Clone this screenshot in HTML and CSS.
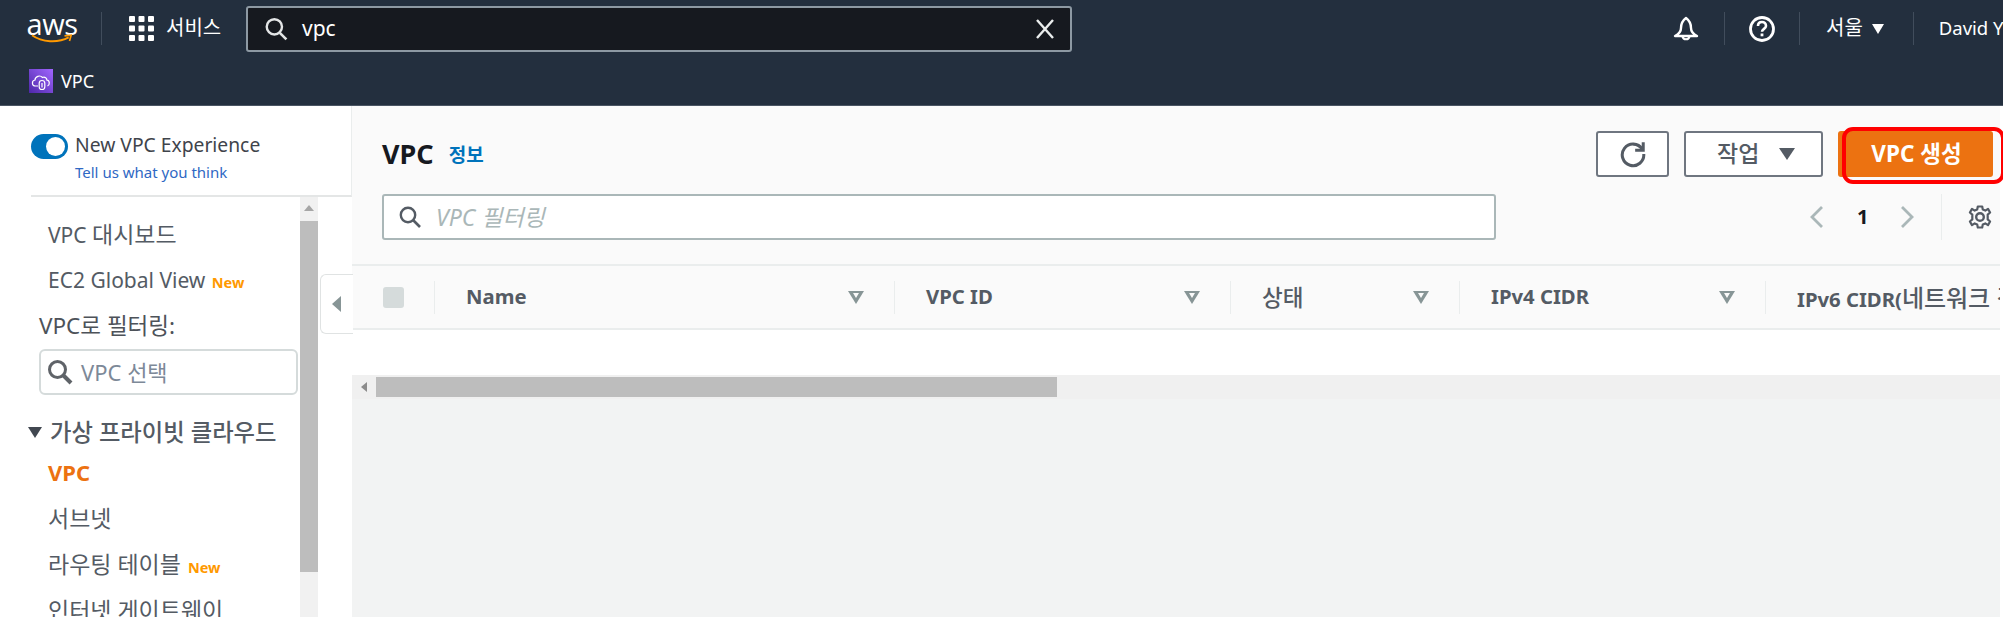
FILE: index.html
```html
<!DOCTYPE html>
<html lang="ko">
<head>
<meta charset="utf-8">
<title>VPC</title>
<link rel="stylesheet" href="styles.css">
</head>
<body>
<div class="app">
  <header class="topbar">
    <div class="toprow">
      <div class="logo">
        <span class="logo-text">aws</span>
        <svg class="logo-smile" viewBox="0 0 50 12" width="50" height="12"><path d="M1 1.5C13 10 32 11 45 4" fill="none" stroke="#f90" stroke-width="2.4"/><path d="M40 2.2L48 1.4L46 8.5" fill="none" stroke="#f90" stroke-width="2"/></svg>
      </div>
      <span class="vsep sep-logo"></span>
      <svg class="grid-icon" viewBox="0 0 25 25" width="25" height="25"><g fill="#fff"><rect width="6" height="6" rx="1"/><rect x="9.500" width="6" height="6" rx="1"/><rect x="19" width="6" height="6" rx="1"/><rect y="9.500" width="6" height="6" rx="1"/><rect x="9.500" y="9.500" width="6" height="6" rx="1"/><rect x="19" y="9.500" width="6" height="6" rx="1"/><rect y="19" width="6" height="6" rx="1"/><rect x="9.500" y="19" width="6" height="6" rx="1"/><rect x="19" y="19" width="6" height="6" rx="1"/></g></svg>
      <span class="services">서비스</span>
      <div class="topsearch">
        <svg viewBox="0 0 22 22" width="24" height="24"><circle cx="9.500" cy="9" r="7" fill="none" stroke="#e3e5e6" stroke-width="2.200"/><path d="M14.500 14.500L20.500 20.500" stroke="#e3e5e6" stroke-width="2.400"/></svg>
        <span class="topsearch-text">vpc</span>
        <svg class="clear" viewBox="0 0 20 20" width="20" height="20"><path d="M2 1L18 19M18 1L2 19" stroke="#eaeded" stroke-width="2.400"/></svg>
      </div>
      <div class="topright">
        <svg class="bell" viewBox="0 0 26 26" width="26" height="26"><path d="M13 2C9 5 8 8 8 12C8 15 6 18 2 20H24C20 18 18 15 18 12C18 8 17 5 13 2Z" fill="none" stroke="#fff" stroke-width="2.400" stroke-linejoin="round"/><path d="M9.500 20.500A3.600 3.600 0 0 0 16.500 20.500" fill="none" stroke="#fff" stroke-width="2.200"/></svg>
        <span class="vsep sep-bell"></span>
        <svg class="help" viewBox="0 0 26 26" width="26" height="26"><circle cx="13" cy="13" r="11.500" fill="none" stroke="#fff" stroke-width="2.800"/><path d="M9 10C9 7.200 10.800 6 13 6S17 7.500 17 10C17 12.800 13 13 13 15.800" fill="none" stroke="#fff" stroke-width="2.600"/><rect x="11.600" y="17.500" width="2.800" height="2.800" fill="#fff"/></svg>
        <span class="vsep sep-help"></span>
        <span class="region">서울</span>
        <span class="caret"></span>
        <span class="vsep sep-region"></span>
        <span class="user">David Y</span>
      </div>
    </div>
    <div class="subrow">
      <span class="svc-icon">
        <svg viewBox="0 0 24 24" width="24" height="24"><path d="M9 17H6.500C2.500 17 2.500 11.500 6 11C6 7.500 11 5.500 13.500 8.500C16 7.500 18 9.500 17.800 11C21 11.500 21 16 18.500 17" fill="none" stroke="#fff" stroke-width="1.200"/><rect x="10.200" y="11.500" width="5.600" height="9" rx="2.800" fill="none" stroke="#fff" stroke-width="1.200"/><rect x="12.400" y="14" width="1.200" height="4.500" fill="#fff"/></svg>
      </span>
      <span class="svc-name">VPC</span>
    </div>
  </header>

  <div class="body">
    <aside class="sidebar">
      <div class="exp">
        <span class="toggle"><span class="knob"></span></span>
        <div class="exp-text">
          <div class="exp-title">New VPC Experience</div>
          <a class="exp-link">Tell us what you think</a>
        </div>
      </div>
      <div class="navwrap">
        <nav class="nav">
          <div class="item">VPC <span class="ko">대시보드</span></div>
          <div class="item">EC2 Global View <span class="new">New</span></div>
          <div class="label">VPC로 필터링:</div>
          <div class="navinput">
            <svg viewBox="0 0 26 26" width="26" height="26"><circle cx="10.500" cy="10.500" r="8" fill="none" stroke="#5f6368" stroke-width="3"/><path d="M16.500 16.500L24 24" stroke="#5f6368" stroke-width="4"/></svg>
            <span>VPC 선택</span>
          </div>
          <div class="head"><span class="head-caret"></span>가상 프라이빗 클라우드</div>
          <div class="item active">VPC</div>
          <div class="item ko">서브넷</div>
          <div class="item ko">라우팅 테이블 <span class="new">New</span></div>
          <div class="item ko">인터넷 게이트웨이</div>
        </nav>
        <div class="vscroll">
          <div class="vscroll-up"><span></span></div>
          <div class="vscroll-thumb"></div>
        </div>
      </div>
      <div class="collapse"><span></span></div>
    </aside>

    <main class="main">
      <div class="titlerow">
        <span class="title">VPC</span>
        <a class="info">정보</a>
        <button class="btn btn-icon">
          <svg viewBox="0 0 26 26" width="28" height="28"><path d="M21.500 8.500A10 10 0 1 0 23 13" fill="none" stroke="#545b64" stroke-width="2.800"/><path d="M22.500 2V9.500H15" fill="none" stroke="#545b64" stroke-width="2.800"/></svg>
        </button>
        <button class="btn btn-action"><span class="btn-text">작업</span><span class="btn-caret"></span></button>
        <div class="primary-wrap">
          <button class="btn-primary"><span class="primary-text">VPC 생성</span></button>
          <span class="redbox"></span>
        </div>
      </div>
      <div class="filterrow">
        <div class="filter">
          <svg viewBox="0 0 22 22" width="22" height="22"><circle cx="9" cy="9" r="7.200" fill="none" stroke="#545b64" stroke-width="2.400"/><path d="M14 14L21 21" stroke="#545b64" stroke-width="2.600"/></svg>
          <span>VPC 필터링</span>
        </div>
        <div class="pager">
          <svg class="chev" viewBox="0 0 14 24" width="14" height="24"><path d="M12 2L2 12L12 22" fill="none" stroke="#aab7b8" stroke-width="2.800"/></svg>
          <span class="page">1</span>
          <svg class="chev" viewBox="0 0 14 24" width="14" height="24"><path d="M2 2L12 12L2 22" fill="none" stroke="#aab7b8" stroke-width="2.800"/></svg>
          <span class="pager-sep"></span>
          <svg class="gear" viewBox="0 0 24 24" width="24" height="24"><circle cx="12" cy="12" r="3.800" fill="none" stroke="#545b64" stroke-width="2.400"/><path d="M9.800 1.500H14.200L14.800 4.600L17.300 5.600L20 3.900L22.100 7.500L19.700 9.600V14.400L22.100 16.500L20 20.100L17.300 18.400L14.800 19.400L14.200 22.500H9.800L9.200 19.400L6.700 18.400L4 20.100L1.900 16.500L4.300 14.400V9.600L1.900 7.500L4 3.900L6.700 5.600L9.200 4.600Z" fill="none" stroke="#545b64" stroke-width="2.200" stroke-linejoin="round"/></svg>
        </div>
      </div>
      <div class="thead">
        <div class="th th-check"><span class="check"></span></div>
        <div class="th th-name"><span>Name</span><i class="sort"></i></div>
        <div class="th th-id"><span>VPC ID</span><i class="sort"></i></div>
        <div class="th th-state"><span class="ko-th">상태</span><i class="sort"></i></div>
        <div class="th th-v4"><span>IPv4 CIDR</span><i class="sort"></i></div>
        <div class="th th-v6"><span>IPv6 CIDR(<span class="ko-wide">네트워크 경계 그룹</span>)</span></div>
      </div>
      <div class="tbody"></div>
      <div class="hscroll">
        <span class="hscroll-left"></span>
        <span class="hscroll-thumb"></span>
      </div>
    </main>
  </div>
</div>
</body>
</html>
```

FILE: styles.css
```css
* { box-sizing: border-box; }
html, body { margin: 0; padding: 0; background: #fff; }
body { font-family: "Noto Sans", "Noto Sans CJK KR", sans-serif; }
.app { width: 2003px; height: 617px; overflow: hidden; display: flex; flex-direction: column; }

/* top bar */
.topbar { height: 106px; background: #232f3e; color: #fff; flex: none; border-bottom: 1px solid #4a5563; }
.toprow { height: 57px; display: flex; align-items: center; padding-left: 27px; }
.logo { width: 50px; height: 32px; display: flex; flex-direction: column; align-items: center; margin-top: -2px; }
.logo-text { font-family: "Open Sans", sans-serif; font-size: 29px; line-height: 23px; height: 23px; letter-spacing: -.5px; }
.logo-smile { margin-top: -1px; }
.vsep { display: block; width: 1px; height: 33px; background: #414d5c; flex: none; }
.sep-logo { margin-left: 24px; }
.grid-icon { margin-left: 27px; flex: none; }
.services { margin-left: 12px; width: 80px; font-size: 20px; padding-bottom: 4px; }
.topsearch { width: 826px; height: 46px; background: #16191f; border: 2px solid #8d99a3; border-radius: 3px; display: flex; align-items: center; padding-left: 16px; }
.topsearch-text { margin-left: 14px; font-size: 21px; color: #fff; flex: 1; padding-bottom: 2px; }
.clear { margin-right: 15px; }
.topright { flex: 1; display: flex; align-items: center; overflow: hidden; }
.bell { margin-left: 601px; flex: none; }
.sep-bell { margin-left: 25px; }
.help { margin-left: 24px; flex: none; }
.sep-help { margin-left: 24px; }
.region { margin-left: 26px; width: 40px; font-size: 20px; white-space: nowrap; padding-bottom: 4px; }
.caret { width: 0; height: 0; margin-left: 9px; border-left: 6.500px solid transparent; border-right: 6.500px solid transparent; border-top: 10px solid #fff; flex: none; }
.sep-region { margin-left: 29px; }
.user { margin-left: 25px; font-size: 18.500px; white-space: nowrap; padding-bottom: 2px; }
.subrow { height: 48px; display: flex; align-items: center; padding-left: 29px; }
.svc-icon { width: 24px; height: 24px; background: linear-gradient(45deg, #4d27a8, #a166ff); display: block; }
.svc-icon svg { display: block; }
.svc-name { margin-left: 8px; font-size: 18px; }

/* body */
.body { flex: 1; display: flex; min-height: 0; padding-right: 3px; }
.sidebar { width: 352px; flex: none; position: relative; display: flex; flex-direction: column; color: #545b64; }
.exp { height: 91px; margin-left: 31px; display: flex; align-items: flex-start; padding-top: 27px; border-bottom: 2px solid #e4e6e6; border-right: 1px solid #eaeded; flex: none; }
.toggle { width: 37px; height: 25px; border-radius: 13px; background: #0073bb; position: relative; flex: none; margin-top: 1px; }
.knob { position: absolute; left: 15px; top: 3px; width: 19px; height: 19px; border-radius: 50%; background: #fff; }
.exp-text { margin-left: 7px; }
.exp-title { font-size: 19.300px; line-height: 24px; color: #3f444b; white-space: nowrap; }
.exp-link { display: block; margin-top: 4px; font-size: 15px; line-height: 22px; color: #2f68c4; white-space: nowrap; }

.navwrap { flex: 1; display: flex; min-height: 0; }
.nav { width: 300px; padding-top: 14px; flex: none; overflow: hidden; }
.item { height: 46px; line-height: 46px; margin-left: 48px; font-size: 21px; color: #545b64; white-space: nowrap; }
.ko { font-size: 23px; }
.new { font-size: 14.500px; font-weight: 700; color: #ff9900; margin-left: 1px; }
.label { height: 46px; line-height: 46px; margin-left: 39px; font-size: 22.500px; color: #4d5259; white-space: nowrap; }
.navinput { margin-left: 39px; width: 259px; height: 46px; border: 2px solid #d5dbdb; border-radius: 6px; display: flex; align-items: center; padding-left: 6px; color: #7d8998; font-size: 22px; }
.navinput span { margin-left: 8px; padding-bottom: 2px; }
.head { height: 46px; line-height: 46px; margin-top: 14px; padding-left: 28px; font-size: 23.300px; font-weight: 500; color: #545b64; display: flex; align-items: center; white-space: nowrap; }
.head-caret { width: 0; height: 0; margin-right: 8px; border-left: 7.500px solid transparent; border-right: 7.500px solid transparent; border-top: 11px solid #414750; flex: none; }
.item.active { height: 34px; line-height: 34px; margin-bottom: 6px; font-size: 22px; color: #ec7211; font-weight: 700; }

.vscroll { width: 18px; background: #f1f1f1; flex: none; }
.vscroll-up { height: 24px; display: flex; justify-content: center; padding-top: 8px; }
.vscroll-up span { width: 0; height: 0; border-left: 5.500px solid transparent; border-right: 5.500px solid transparent; border-bottom: 6px solid #a6a6a6; }
.vscroll-thumb { height: 351px; background: #bdbdbd; }

.collapse { position: absolute; left: 320px; top: 168px; width: 33px; height: 60px; background: #fff; border: 1px solid #e0e3e3; border-right: none; border-radius: 6px 0 0 6px; display: flex; align-items: center; padding-left: 11px; }
.collapse span { width: 0; height: 0; border-top: 8.500px solid transparent; border-bottom: 8.500px solid transparent; border-right: 9px solid #879596; }

/* main */
.main { flex: 1; background: #f2f3f3; min-width: 0; display: flex; flex-direction: column; }
.titlerow { height: 88px; background: #fafafa; padding: 25px 0 0 30px; display: flex; align-items: flex-start; flex: none; }
.title { font-size: 27px; font-weight: 700; color: #16191f; line-height: 46px; }
.info { margin-left: 15px; font-size: 19px; font-weight: 700; color: #0073bb; line-height: 48px; flex: 1; }
.btn { height: 46px; background: #fff; border: 2px solid #6f7680; border-radius: 3px; color: #545b64; font-family: inherit; display: flex; align-items: center; padding: 0; }
.btn-icon { width: 73px; justify-content: center; }
.btn-action { width: 139px; margin-left: 15px; padding-left: 31px; font-size: 23px; font-weight: 500; }
.btn-text { padding-bottom: 4px; }
.btn-caret { margin-left: 20px; width: 0; height: 0; border-left: 8px solid transparent; border-right: 8px solid transparent; border-top: 12px solid #545b64; }
.primary-wrap { margin-left: 15px; width: 162px; position: relative; height: 46px; }
.btn-primary { width: 155px; height: 46px; background: #ec7211; border: none; border-radius: 3px; color: #fff; font-family: inherit; font-size: 22.500px; font-weight: 700; padding: 0 0 4px 2px; }
.primary-text { display: block; }
.redbox { position: absolute; left: 4px; top: -4px; width: 163px; height: 57px; border: 4.500px solid #f00; border-radius: 11px; }

.filterrow { height: 70px; background: #fafafa; padding: 0 0 0 30px; display: flex; align-items: flex-start; flex: none; }
.filter { width: 1114px; height: 46px; background: #fff; border: 2px solid #aab7b8; border-radius: 3px; display: flex; align-items: center; padding-left: 15px; flex: none; }
.filter span { margin-left: 15px; font-size: 23px; font-style: italic; color: #aab7b8; padding-bottom: 3px; }
.pager { display: flex; align-items: center; height: 46px; margin-left: 314px; flex: none; }
.page { margin-left: 33px; width: 8px; font-size: 20px; font-weight: 700; color: #16191f; line-height: 46px; }
.chev { flex: none; }
.page + .chev { margin-left: 35px; }
.pager-sep { width: 1px; height: 46px; background: #eaeded; margin-left: 27px; }
.gear { margin-left: 26px; }

.thead { height: 66px; background: #fafafa; border-top: 2px solid #eaeded; border-bottom: 2px solid #eaeded; display: flex; align-items: center; flex: none; overflow: hidden; }
.th { height: 33px; display: flex; align-items: center; font-size: 20.300px; font-weight: 700; color: #545b64; border-right: 1px solid #eaeded; flex: none; white-space: nowrap; padding: 0 0 2px 31px; position: relative; }
.ko-th { font-size: 22.500px; font-weight: 500; }
.ko-wide { font-size: 24px; font-weight: 500; }
.th-check { width: 83px; padding: 0 0 0 31px; }
.check { width: 21px; height: 21px; background: #d5dbdb; border-radius: 3px; }
.th-name { width: 460px; }
.th-id { width: 336px; }
.th-state { width: 229px; }
.th-v4 { width: 306px; }
.th-v6 { width: 300px; border-right: none; overflow: hidden; }
.sort { position: absolute; right: 30px; top: 10px; width: 0; height: 0; border-left: 8px solid transparent; border-right: 8px solid transparent; border-top: 13px solid #879596; }
.sort::after { content: ""; position: absolute; left: -3px; top: -10.500px; width: 0; height: 0; border-left: 3px solid transparent; border-right: 3px solid transparent; border-top: 5px solid #fafafa; }
.tbody { height: 45px; background: #fff; flex: none; }
.hscroll { height: 24px; background: #f0f0f0; display: flex; align-items: center; flex: none; }
.hscroll-left { margin-left: 9px; width: 0; height: 0; border-top: 5px solid transparent; border-bottom: 5px solid transparent; border-right: 6px solid #8c8c8c; }
.hscroll-thumb { margin-left: 9px; width: 681px; height: 20px; background: #bdbdbd; }
```
